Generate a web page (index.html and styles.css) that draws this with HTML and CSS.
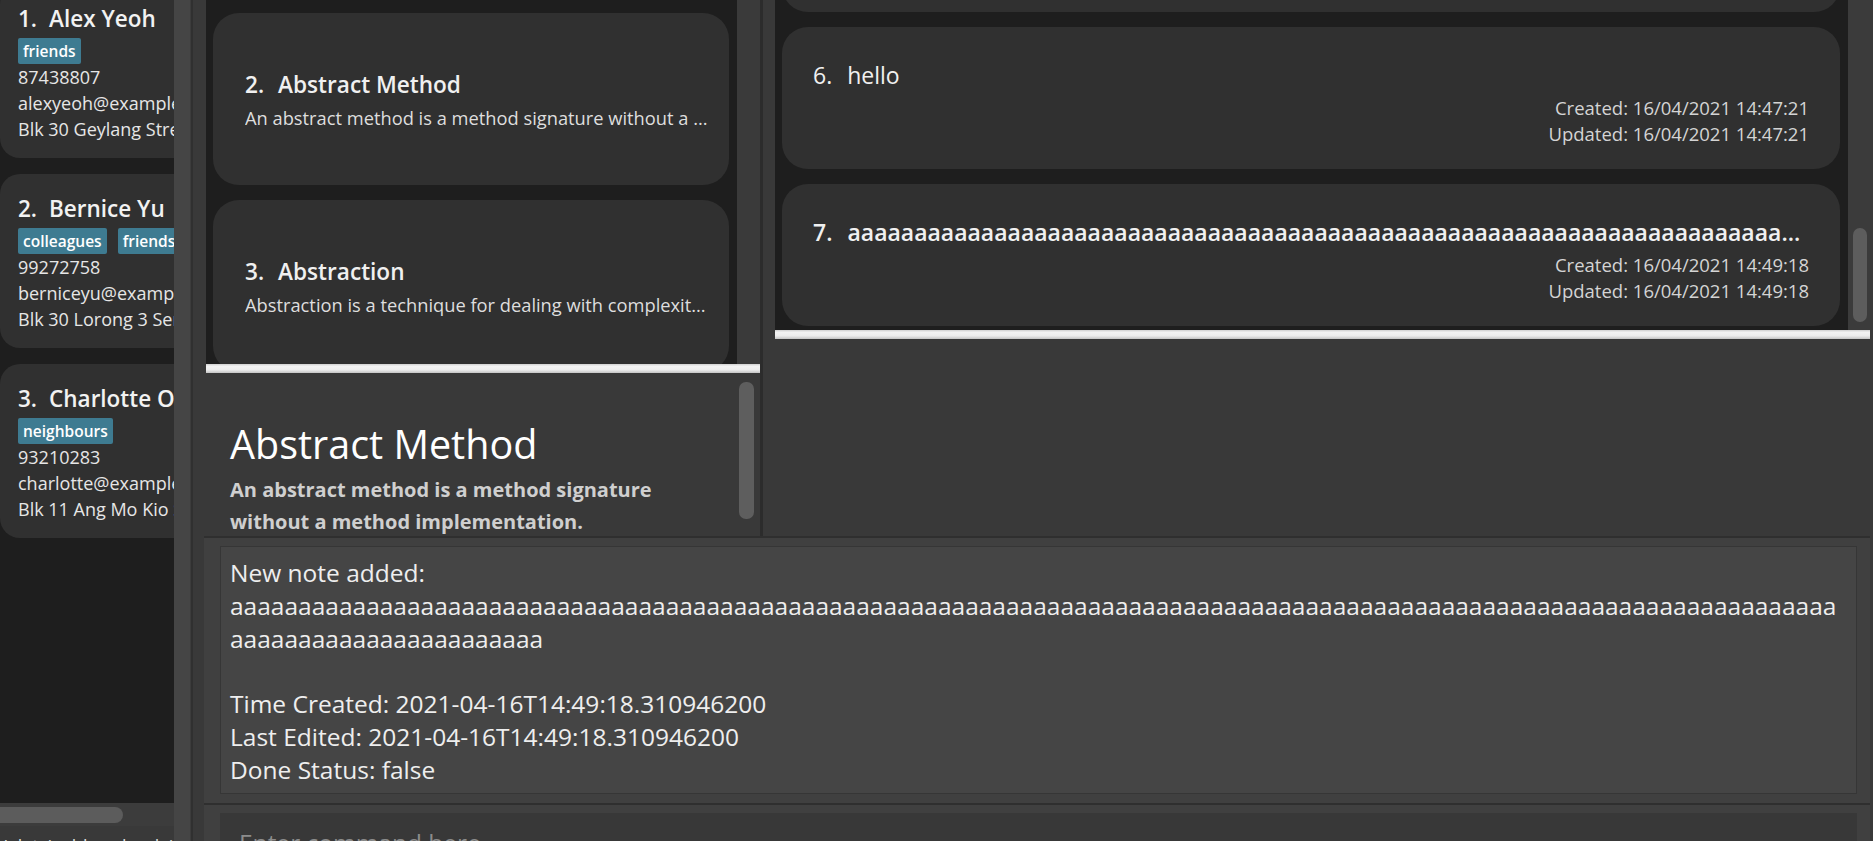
FILE: index.html
```html
<!DOCTYPE html>
<html lang="en">
<head>
<meta charset="utf-8">
<title>Notes</title>
<link rel="stylesheet" href="styles.css">
</head>
<body>
<div class="app">
  <aside class="people">
    <div class="people-list">
      <div class="person-card first">
        <div class="name"><span class="idx">1.</span>Alex Yeoh</div>
        <div class="tags"><span class="tag">friends</span></div>
        <div class="line">87438807</div>
        <div class="line">alexyeoh@example.com</div>
        <div class="line">Blk 30 Geylang Street 29, #06-40</div>
      </div>
      <div class="person-card">
        <div class="name"><span class="idx">2.</span>Bernice Yu</div>
        <div class="tags"><span class="tag">colleagues</span><span class="tag">friends</span></div>
        <div class="line">99272758</div>
        <div class="line">berniceyu@example.com</div>
        <div class="line">Blk 30 Lorong 3 Serangoon Gardens, #07-18</div>
      </div>
      <div class="person-card">
        <div class="name"><span class="idx">3.</span>Charlotte Oliveiro</div>
        <div class="tags"><span class="tag">neighbours</span></div>
        <div class="line">93210283</div>
        <div class="line">charlotte@example.com</div>
        <div class="line">Blk 11 Ang Mo Kio Street 74, #11-04</div>
      </div>
    </div>
    <div class="hscroll"><div class="hthumb"></div></div>
    <div class="status">.\data\addressbook.json</div>
  </aside>
  <div class="gutter"></div>
  <div class="divider"></div>
  <main class="main">
    <div class="top">
      <section class="mid">
        <div class="mid-list">
          <div class="mid-scroll">
            <div class="note-card">
              <div class="note-title"><span class="nidx">2.</span>Abstract Method</div>
              <div class="note-desc">An abstract method is a method signature without a ...</div>
            </div>
            <div class="note-card">
              <div class="note-title"><span class="nidx">3.</span>Abstraction</div>
              <div class="note-desc">Abstraction is a technique for dealing with complexit...</div>
            </div>
          </div>
          <div class="mid-track"></div>
        </div>
        <div class="bar"></div>
        <div class="detail">
          <div class="detail-content">
            <h1>Abstract Method</h1>
            <p>An abstract method is a method signature<br>without a method implementation.</p>
          </div>
          <div class="detail-track"><div class="detail-thumb"></div></div>
        </div>
      </section>
      <div class="vdiv"></div>
      <section class="right">
        <div class="right-list">
          <div class="right-scroll">
            <div class="rcard ghost"></div>
            <div class="rcard">
              <div class="rtitle"><span class="ridx">6.</span>hello</div>
              <div class="rmeta">Created: 16/04/2021 14:47:21</div>
              <div class="rmeta2">Updated: 16/04/2021 14:47:21</div>
            </div>
            <div class="rcard">
              <div class="rtitle bold"><span class="ridx">7.</span>aaaaaaaaaaaaaaaaaaaaaaaaaaaaaaaaaaaaaaaaaaaaaaaaaaaaaaaaaaaaaaaaaaaaaaaaaaaaaaaaaaaaaaaaaaaaaaaaaaaaaaaaaaaaaaaaaaaaaaaaaaaaaaaaaaaaaaaaaaaaa</div>
              <div class="rmeta">Created: 16/04/2021 14:49:18</div>
              <div class="rmeta2">Updated: 16/04/2021 14:49:18</div>
            </div>
          </div>
          <div class="right-track"><div class="right-thumb"></div></div>
        </div>
        <div class="bar"></div>
      </section>
    </div>
    <div class="result">
      <div class="result-inner">
        <div>New note added:</div>
        <div class="long">aaaaaaaaaaaaaaaaaaaaaaaaaaaaaaaaaaaaaaaaaaaaaaaaaaaaaaaaaaaaaaaaaaaaaaaaaaaaaaaaaaaaaaaaaaaaaaaaaaaaaaaaaaaaaaaaaaaaaaaaaaaaaaaaaaaaaaaaaaaaa</div>
        <div class="blank"></div>
        <div>Time Created: 2021-04-16T14:49:18.310946200</div>
        <div>Last Edited: 2021-04-16T14:49:18.310946200</div>
        <div>Done Status: false</div>
      </div>
    </div>
    <div class="cmd"><div class="cmd-inner">Enter command here...</div></div>
  </main>
</div>
</body>
</html>
```

FILE: styles.css
```css
* { box-sizing: border-box; margin: 0; padding: 0; }
html, body { width: 1873px; height: 841px; overflow: hidden; background: #393939; }
body { font-family: "Open Sans", "Noto Sans", sans-serif; color: #eeeeee; }

.app { display: flex; height: 841px; }

/* people column */
.people { width: 174px; flex-shrink: 0; display: flex; flex-direction: column; }
.people-list { height: 803px; background: #1e1e1e; overflow: hidden; }
.person-card { width: 420px; height: 174px; background: #303030; border-radius: 20px; padding: 22px 18px 16px; margin-bottom: 16px; }
.person-card.first { margin-top: -16px; }
.name { font-size: 22.5px; font-weight: 600; line-height: 26px; color: #f2f2f2; white-space: nowrap; }
.idx { margin-right: 12px; }
.tags { display: flex; gap: 11px; margin-top: 6px; height: 26px; }
.tag { background: #3e7b91; color: #ffffff; font-size: 15.5px; font-weight: 600; line-height: 26px; padding: 0 5px; border-radius: 2px; }
.line { font-size: 18px; line-height: 26px; color: #e6e6e6; white-space: nowrap; }
.hscroll { height: 23px; background: #3c3c3c; padding-top: 4px; }
.hthumb { width: 123px; height: 16px; background: #5c5c5c; border-radius: 0 8px 8px 0; }
.status { flex: 1; font-size: 18px; line-height: 24px; padding-top: 8px; color: #dddddd; white-space: nowrap; overflow: hidden; }

.gutter { width: 16px; flex-shrink: 0; background: #454545; }
.divider { width: 3px; flex-shrink: 0; background: #303030; border-left: 1px solid #3c3c3c; }

.main { flex: 1; display: flex; flex-direction: column; min-width: 0; }
.top { height: 536px; display: flex; flex-shrink: 0; }

/* middle column */
.mid { width: 567px; flex-shrink: 0; padding-left: 13px; display: flex; flex-direction: column; }
.mid-list { height: 364px; display: flex; flex-shrink: 0; }
.mid-scroll { flex: 1; background: #1e1e1e; overflow: hidden; padding: 13px 8px 0 7px; }
.mid-track { width: 23px; background: #3a3a3a; }
.note-card { height: 172px; background: #303030; border-radius: 26px; padding: 57px 12px 0 32px; margin-bottom: 15px; }
.note-title { font-size: 22.6px; font-weight: 600; line-height: 30px; color: #f0f0f0; white-space: nowrap; }
.nidx { margin-right: 14px; }
.note-desc { font-size: 18.3px; line-height: 26px; margin-top: 5px; color: #dedede; white-space: nowrap; overflow: hidden; }
.bar { height: 9px; flex-shrink: 0; background: linear-gradient(#cfcfcf, #f3f3f3 25%, #ededed 65%, #c4c4c4); }
.detail { flex: 1; display: flex; overflow: hidden; }
.detail-content { flex: 1; padding: 49px 0 0 24px; }
.detail h1 { font-size: 39.5px; font-weight: 500; line-height: 44px; color: #ffffff; }
.detail p { font-size: 20px; font-weight: 700; line-height: 32px; margin-top: 8px; color: #cfcfcf; }
.detail-track { width: 21px; padding: 9px 6px 0 0; }
.detail-thumb { width: 15px; height: 137px; background: #5e5e5e; border-radius: 7px; }

.vdiv { width: 3px; flex-shrink: 0; background: #2c2c2c; }

/* right column */
.right { flex: 1; padding-left: 12px; }
.right-list { width: 1095px; height: 330px; display: flex; }
.right-scroll { flex: 1; background: #1e1e1e; overflow: hidden; padding: 0 8px 0 7px; min-width: 0; }
.right-track { width: 22px; background: #3b3b3b; padding: 228px 3px 0 5px; }
.right-thumb { width: 14px; height: 94px; background: #5d5d5d; border-radius: 7px; }
.rcard { height: 142px; background: #303030; border-radius: 26px; padding: 34px 31px 0; margin-bottom: 15px; }
.rcard.ghost { margin-top: -130px; }
.rtitle { font-size: 23px; line-height: 28px; color: #f0f0f0; white-space: nowrap; overflow: hidden; text-overflow: ellipsis; }
.rtitle.bold { font-weight: 600; }
.ridx { margin-right: 15px; }
.rmeta, .rmeta2 { text-align: right; font-size: 18.5px; line-height: 26px; color: #d4d4d4; white-space: nowrap; }
.rmeta { margin-top: 6px; }
.right .bar { width: 1095px; }

/* result + command */
.result { margin-left: 11px; width: 1666px; height: 267px; flex-shrink: 0; background: #404040; border-top: 2px solid #2f2f2f; padding: 8px 13px 9px 16px; }
.result-inner { height: 100%; background: #454545; border: 1px solid #363636; padding: 10px 11px 0 9px; font-size: 24.5px; line-height: 32.8px; color: #eeeeee; overflow: hidden; }
.long { word-break: break-all; }
.blank { height: 32.8px; }
.cmd { margin-left: 11px; width: 1666px; flex: 1; background: #404040; border-top: 2px solid #2f2f2f; padding: 8px 13px 0 16px; overflow: hidden; }
.cmd-inner { height: 60px; background: #383838; padding: 14px 19px; font-size: 24.5px; line-height: 32px; color: #8c8c8c; }
```
